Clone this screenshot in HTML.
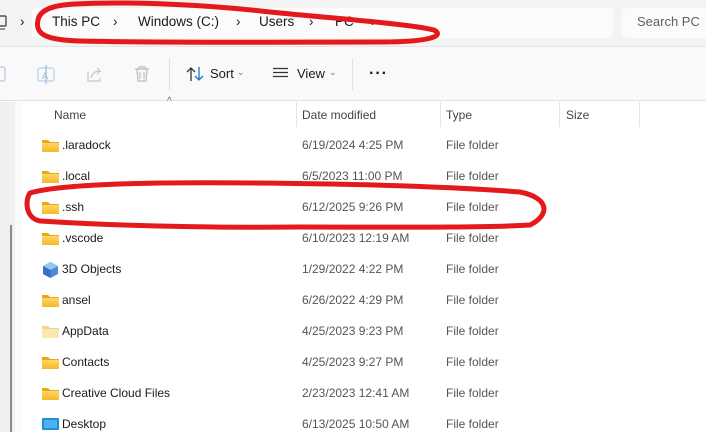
<!DOCTYPE html>
<html><head><meta charset="utf-8"><style>
*{margin:0;padding:0;box-sizing:border-box}
body{width:706px;height:432px;overflow:hidden;background:#fff;font-family:"Segoe UI","Liberation Sans",sans-serif;font-size:12px;color:#1a1a1a;position:relative}
.top{position:absolute;left:0;top:0;width:706px;height:47px;background:#f3f3f3;border-bottom:1px solid #e5e5e5}
.addr{position:absolute;left:32px;top:8px;width:581px;height:30px;background:#fbfbfb;border-radius:4px}
.search{position:absolute;left:622px;top:8px;width:90px;height:30px;background:#fbfbfb;border-radius:4px;color:#5f5f5f;font-size:13px;padding:6px 0 0 15px}
.t{position:absolute;font-size:13.5px;color:#1a1a1a}
.tb{position:absolute;left:0;top:47px;width:706px;height:54px;background:#f9f9f9;border-bottom:1px solid #e3e3e3}
.left{position:absolute;left:0;top:102px;width:15px;height:330px;background:#f0f0f0}
.sb{position:absolute;left:10px;top:225px;width:2px;height:207px;background:#8a8a8a}
.hd{position:absolute;top:102px;height:26px;color:#444;font-size:12px;padding-top:6px}
.sep{position:absolute;top:102px;width:1px;height:25px;background:#e5e5e5}
.row{position:absolute;left:22px;width:684px;height:31px;font-size:12px}
.row span{position:absolute;top:8px}
.row svg{position:absolute;left:20px;top:8px}
</style></head><body>
<div class="top"></div>
<div class="addr"></div>
<svg style="position:absolute;left:0;top:14px" width="8" height="18"><rect x="-4" y="2" width="10" height="10" fill="none" stroke="#333" stroke-width="1.2" rx="1"/><line x1="0" y1="15" x2="5" y2="15" stroke="#333"/></svg>
<div class="t" style="left:20px;top:14px">›</div>
<div class="t" style="left:52px;top:14px">This PC</div>
<div class="t" style="left:113px;top:14px">›</div>
<div class="t" style="left:138px;top:14px">Windows (C:)</div>
<div class="t" style="left:236px;top:14px">›</div>
<div class="t" style="left:259px;top:14px">Users</div>
<div class="t" style="left:309px;top:14px">›</div>
<div class="t" style="left:335px;top:14px">PC</div>
<div class="t" style="left:371px;top:14px">›</div>
<div class="search">Search PC</div>
<div class="tb"></div>
<svg style="position:absolute;left:0;top:60px" width="170" height="30" fill="none" stroke="#b8c8dc" stroke-width="1.2">
<rect x="-4" y="7" width="9" height="14" rx="2"/>
<rect x="38" y="8" width="16" height="13" rx="2" stroke="#b8d0ea"/><path d="M46 5v19" stroke="#9ab8dc"/><text x="42" y="19" font-size="9" fill="#9ab8dc" stroke="none" font-family="Liberation Sans">A</text>
<path d="M88 12 v9 h12 v-3 M91 18 q2-7 9-7 l-3-3 M100 11 l-3 3" />
<path d="M135 9 h14 M139 9 v-2 h6 v2 M137 9 l1 12 h8 l1-12 M140 12 v7 M144 12 v7" stroke="#bbb"/>
</svg>
<div style="position:absolute;left:169px;top:58px;width:1px;height:32px;background:#e0e0e0"></div>
<div style="position:absolute;left:352px;top:58px;width:1px;height:32px;background:#e0e0e0"></div>
<svg style="position:absolute;left:186px;top:66px" width="20" height="16" fill="none" stroke-width="1.3"><path d="M5 15 V2 M1 6 l4-4 4 4" stroke="#333"/><path d="M13 1 v13 M9 10 l4 4 4-4" stroke="#1a73c8"/></svg>
<div class="t" style="left:210px;top:66px;font-size:13px">Sort</div>
<div class="t" style="left:237px;top:67px;font-size:9px;color:#777">⌄</div>
<svg style="position:absolute;left:272px;top:67px" width="18" height="12" stroke="#333" stroke-width="1.2"><path d="M1 1.5h15M1 5.5h15M1 9.5h15"/></svg>
<div class="t" style="left:297px;top:66px;font-size:13px">View</div>
<div class="t" style="left:329px;top:67px;font-size:9px;color:#777">⌄</div>
<div class="t" style="left:369px;top:65px;font-size:16px;font-weight:bold;letter-spacing:1px">···</div>
<div class="left"></div><div class="sb"></div>
<div style="position:absolute;left:15px;top:102px;width:7px;height:330px;background:#fafafa"></div>
<div class="hd" style="left:54px">Name</div>
<div class="t" style="left:167px;top:96px;font-size:10px;color:#666">^</div>
<div class="sep" style="left:296px"></div><div class="hd" style="left:302px">Date modified</div>
<div class="sep" style="left:440px"></div><div class="hd" style="left:446px">Type</div>
<div class="sep" style="left:559px"></div><div class="hd" style="left:566px">Size</div>
<div class="sep" style="left:639px"></div>

<svg width="0" height="0" style="position:absolute"><defs>
<linearGradient id="fg" x1="0" y1="0" x2="0" y2="1"><stop offset="0" stop-color="#ffd766"/><stop offset="1" stop-color="#f5b82a"/></linearGradient></defs></svg>

<div class="row" style="top:130px"><svg width="17" height="14"><path d="M0 2h6l2 2h9v10H0z" fill="#e9a912"/><rect y="5" width="17" height="9" fill="url(#fg)"/></svg><span style="left:40px">.laradock</span><span style="left:280px;color:#555">6/19/2024 4:25 PM</span><span style="left:424px;color:#555">File folder</span></div>
<div class="row" style="top:161px"><svg width="17" height="14"><path d="M0 2h6l2 2h9v10H0z" fill="#e9a912"/><rect y="5" width="17" height="9" fill="url(#fg)"/></svg><span style="left:40px">.local</span><span style="left:280px;color:#555">6/5/2023 11:00 PM</span><span style="left:424px;color:#555">File folder</span></div>
<div class="row" style="top:192px"><svg width="17" height="14"><path d="M0 2h6l2 2h9v10H0z" fill="#e9a912"/><rect y="5" width="17" height="9" fill="url(#fg)"/></svg><span style="left:40px">.ssh</span><span style="left:280px;color:#555">6/12/2025 9:26 PM</span><span style="left:424px;color:#555">File folder</span></div>
<div class="row" style="top:223px"><svg width="17" height="14"><path d="M0 2h6l2 2h9v10H0z" fill="#e9a912"/><rect y="5" width="17" height="9" fill="url(#fg)"/></svg><span style="left:40px">.vscode</span><span style="left:280px;color:#555">6/10/2023 12:19 AM</span><span style="left:424px;color:#555">File folder</span></div>
<div class="row" style="top:254px"><svg width="17" height="16"><path d="M8.5 0L16 4v8l-7.5 4L1 12V4z" fill="#4a8ad8"/><path d="M8.5 0L16 4 8.5 8 1 4z" fill="#8ec9f2"/><path d="M8.5 8v8L1 12V4z" fill="#3a6fc0"/></svg><span style="left:40px">3D Objects</span><span style="left:280px;color:#555">1/29/2022 4:22 PM</span><span style="left:424px;color:#555">File folder</span></div>
<div class="row" style="top:285px"><svg width="17" height="14"><path d="M0 2h6l2 2h9v10H0z" fill="#e9a912"/><rect y="5" width="17" height="9" fill="url(#fg)"/></svg><span style="left:40px">ansel</span><span style="left:280px;color:#555">6/26/2022 4:29 PM</span><span style="left:424px;color:#555">File folder</span></div>
<div class="row" style="top:316px"><svg width="17" height="14"><path d="M0 2h6l2 2h9v10H0z" fill="#f3d58a"/><rect y="5" width="17" height="9" fill="#fbe7b0"/></svg><span style="left:40px">AppData</span><span style="left:280px;color:#555">4/25/2023 9:23 PM</span><span style="left:424px;color:#555">File folder</span></div>
<div class="row" style="top:347px"><svg width="17" height="14"><path d="M0 2h6l2 2h9v10H0z" fill="#e9a912"/><rect y="5" width="17" height="9" fill="url(#fg)"/></svg><span style="left:40px">Contacts</span><span style="left:280px;color:#555">4/25/2023 9:27 PM</span><span style="left:424px;color:#555">File folder</span></div>
<div class="row" style="top:378px"><svg width="17" height="14"><path d="M0 2h6l2 2h9v10H0z" fill="#e9a912"/><rect y="5" width="17" height="9" fill="url(#fg)"/></svg><span style="left:40px">Creative Cloud Files</span><span style="left:280px;color:#555">2/23/2023 12:41 AM</span><span style="left:424px;color:#555">File folder</span></div>
<div class="row" style="top:409px"><svg width="17" height="14"><rect y="1" width="17" height="12" rx="1" fill="#1f8fd8"/><rect x="2" y="3" width="13" height="8" fill="#49b4f0"/></svg><span style="left:40px">Desktop</span><span style="left:280px;color:#555">6/13/2025 10:50 AM</span><span style="left:424px;color:#555">File folder</span></div>

<svg style="position:absolute;left:0;top:0" width="706" height="432" fill="none" stroke="#e3191b" stroke-width="5" stroke-linecap="round">
<path d="M75 4 C130 1 210 5 270 12 C340 19 410 24 434 30 C445 36 430 42 380 42 C280 42 170 43 80 41 C45 40 35 34 38 20 C40 9 55 5 75 4 Z"/>
<path d="M30 193 C60 184 150 182 250 183 C380 184 470 188 520 192 C550 198 550 215 530 225 C480 228 380 227 300 227 C200 228 120 226 40 221 C25 218 25 200 30 193"/>
</svg>
</body></html>
